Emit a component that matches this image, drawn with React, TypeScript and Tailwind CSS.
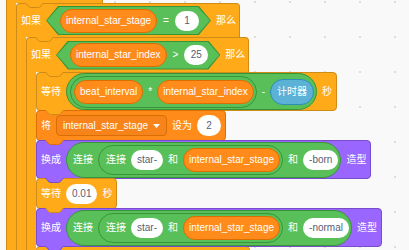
import React from 'react'

type Kids = { children?: React.ReactNode }

const HEX = '[clip-path:polygon(12px_0,calc(100%_-_12px)_0,100%_50%,calc(100%_-_12px)_100%,12px_100%,0_50%)]'

function Label({ children }: Kids) {
  return <span className="text-[10px] leading-none text-white whitespace-nowrap">{children}</span>
}

// little tab under a stack block that sits in the notch of the next one
function Tab({ className, fill, stroke }: { className: string; fill: string; stroke: string }) {
  return (
    <svg className={`absolute z-10 top-full ${className}`} width="19" height="5" viewBox="0 0 19 5">
      <path d="M0.5 0 L4 4 Q4.5 4.5 5.5 4.5 H13.5 Q14.5 4.5 15 4 L18.5 0" fill={fill} stroke={stroke} strokeWidth="1" />
    </svg>
  )
}

function Var({ children }: Kids) {
  return (
    <div className="flex items-center h-[24px] px-[5px] rounded-full bg-[#ff8c1a] border border-[#db6e00]">
      <Label>{children}</Label>
    </div>
  )
}

function Input({ children, className = 'h-[20px]' }: Kids & { className?: string }) {
  return (
    <div className={`flex items-center justify-center min-w-[24px] px-[6px] rounded-full bg-white ${className}`}>
      <span className="text-[10px] leading-none text-[#575e75] whitespace-nowrap">{children}</span>
    </div>
  )
}

function Op({ children, className }: Kids & { className: string }) {
  return (
    <div className={`flex items-center gap-[5px] rounded-full bg-[#59c059] border border-[#389438] ${className}`}>
      {children}
    </div>
  )
}

function Bool({ children }: Kids) {
  return (
    <div className={`h-[29px] p-[1px] bg-[#389438] ${HEX}`}>
      <div className={`h-full flex items-center gap-[6px] pl-[13px] pr-[11px] bg-[#59c059] ${HEX}`}>{children}</div>
    </div>
  )
}

function Arm() {
  return <div className="w-[10px] shrink-0 bg-[#ffab19] border-l border-[#cf8b17]" />
}

function IfHeader({ children }: Kids) {
  return (
    <div className="relative flex items-center gap-[5px] pl-[4px] pr-[3px] bg-[#ffab19] border-t border-x border-[#cf8b17] rounded-t-[4px]">
      {children}
      <Tab className="left-[18px]" fill="#ffab19" stroke="#cf8b17" />
    </div>
  )
}

function Block({ children, className, fill, stroke }: Kids & { className: string; fill: string; stroke: string }) {
  return (
    <div className={`relative flex items-center gap-[5px] pl-[4px] pr-[4px] -mb-px border rounded-[4px] ${className}`}>
      {children}
      <Tab className="left-[8px]" fill={fill} stroke={stroke} />
    </div>
  )
}

function Switch({ suffix }: { suffix: string }) {
  return (
    <Block className="h-[39px] bg-[#9966ff] border-[#774dcb]" fill="#9966ff" stroke="#774dcb">
      <Label>换成</Label>
      <Op className="h-[36px] pl-[6px] pr-[2px]">
        <Label>连接</Label>
        <Op className="h-[30px] pl-[7px] pr-[2px]">
          <Label>连接</Label>
          <Input>star-</Input>
          <Label>和</Label>
          <Var>internal_star_stage</Var>
        </Op>
        <Label>和</Label>
        <Input>{suffix}</Input>
      </Op>
      <Label>造型</Label>
    </Block>
  )
}

export default function App() {
  return (
    <div className="relative w-[409px] h-[250px] overflow-hidden bg-[#f9f9f9] font-['Liberation_Sans','Noto_Sans_CJK_SC',sans-serif]">
      <svg className="absolute inset-0" width="409" height="250">
        <defs>
          <pattern id="dots" x="9" y="1" width="35" height="35" patternUnits="userSpaceOnUse">
            <rect width="2" height="2" fill="#dddddd" />
          </pattern>
        </defs>
        <rect width="409" height="250" fill="url(#dots)" />
      </svg>

      <div className="relative pl-[6px] flex flex-col items-start">
        <div className="relative h-[3px] w-[97px] bg-[#ffab19] border-x border-[#cf8b17]">
          <Tab className="left-[18px]" fill="#ffab19" stroke="#cf8b17" />
        </div>
        <div className="flex">
          <Arm />
          <div className="flex flex-col items-start">
            <IfHeader>
              <div className="h-[33px] flex items-center gap-[5px]">
                <Label>如果</Label>
                <Bool>
                  <Var>internal_star_stage</Var>
                  <Label>=</Label>
                  <Input>1</Input>
                </Bool>
                <Label>那么</Label>
              </div>
            </IfHeader>
            <div className="flex">
              <Arm />
              <div className="flex flex-col items-start">
                <IfHeader>
                  <div className="h-[34px] flex items-center gap-[5px]">
                    <Label>如果</Label>
                    <Bool>
                      <Var>internal_star_index</Var>
                      <Label>&gt;</Label>
                      <Input>25</Input>
                    </Bool>
                    <Label>那么</Label>
                  </div>
                </IfHeader>
                <div className="flex">
                  <Arm />
                  <div className="flex flex-col items-start">
                    <Block className="h-[39px] bg-[#ffab19] border-[#cf8b17]" fill="#ffab19" stroke="#cf8b17">
                      <Label>等待</Label>
                      <Op className="h-[37px] pl-[3px] pr-[2px]">
                        <Op className="h-[32px] pl-[3px] pr-[2px]">
                          <Var>beat_interval</Var>
                          <Label>*</Label>
                          <Var>internal_star_index</Var>
                        </Op>
                        <Label>-</Label>
                        <div className="flex items-center h-[26px] px-[6px] rounded-full bg-[#5cb1d6] border border-[#2e8eb8]">
                          <Label>计时器</Label>
                        </div>
                      </Op>
                      <Label>秒</Label>
                    </Block>

                    <Block className="h-[31px] bg-[#ff8c1a] border-[#db6e00]" fill="#ff8c1a" stroke="#db6e00">
                      <Label>将</Label>
                      <div className="flex items-center gap-[5px] h-[21px] px-[6px] rounded-[4px] bg-[#f7841a] border border-[#db6e00]">
                        <Label>internal_star_stage</Label>
                        <svg width="7" height="4" viewBox="0 0 7 4">
                          <path d="M0 0 H7 L3.5 4 Z" fill="#ffffff" />
                        </svg>
                      </div>
                      <Label>设为</Label>
                      <Input className="h-[21px]">2</Input>
                    </Block>

                    <Switch suffix="-born" />

                    <Block className="h-[31px] bg-[#ffab19] border-[#cf8b17]" fill="#ffab19" stroke="#cf8b17">
                      <Label>等待</Label>
                      <Input>0.01</Input>
                      <Label>秒</Label>
                    </Block>

                    <Switch suffix="-normal" />

                    <div className="h-[12px] w-[214px] bg-[#ffab19] border border-[#cf8b17] rounded-[4px]" />
                  </div>
                </div>
              </div>
            </div>
          </div>
        </div>
      </div>
    </div>
  )
}
